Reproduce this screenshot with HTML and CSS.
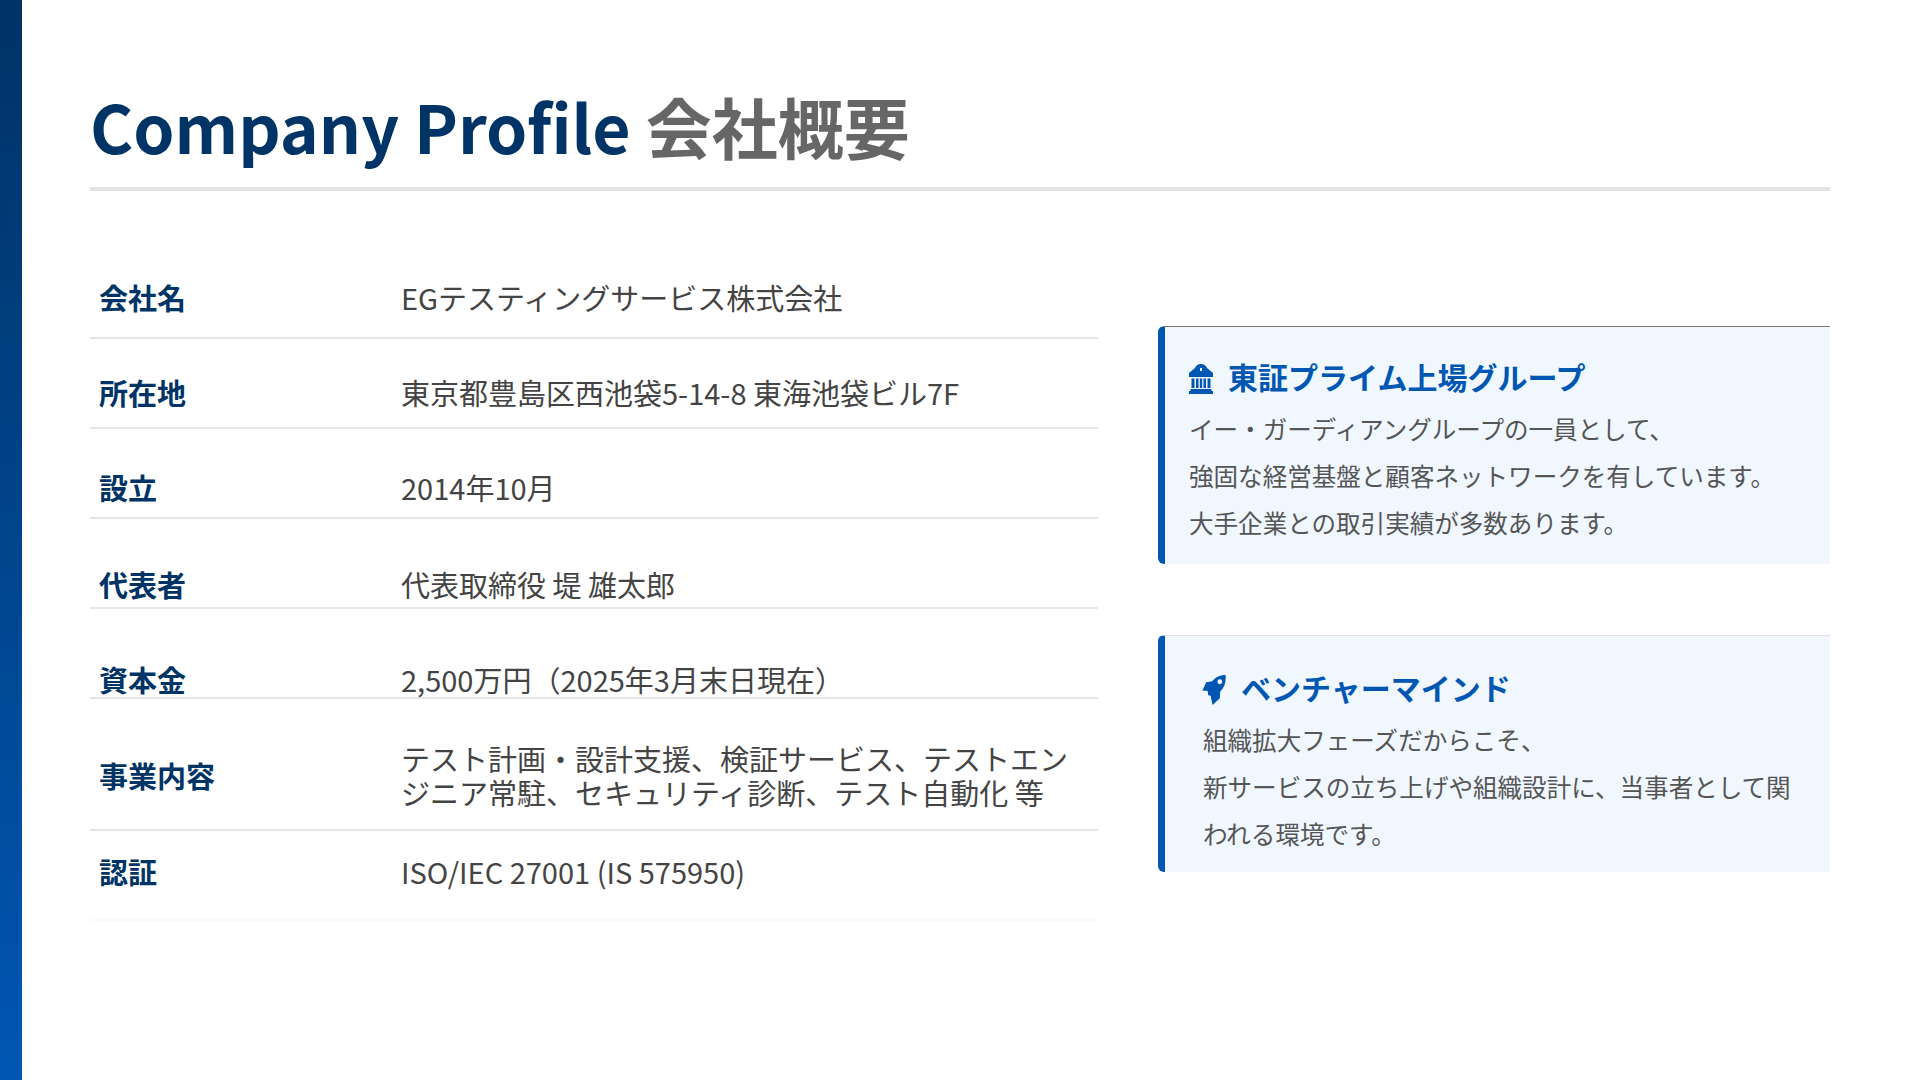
FILE: index.html
```html
<!DOCTYPE html>
<html lang="ja">
<head>
<meta charset="utf-8">
<title>Company Profile 会社概要</title>
<link rel="stylesheet" href="styles.css">
</head>
<body>
<div class="slide">
  <div class="sidebar"></div>
  <main class="content">
    <h1 class="title">Company Profile <span class="title-ja">会社概要</span></h1>
    <div class="columns">
      <div class="table">
        <div class="row row-1"><div class="label">会社名</div><div class="value">EGテスティングサービス株式会社</div></div>
        <div class="row row-2"><div class="label">所在地</div><div class="value">東京都豊島区西池袋5-14-8 東海池袋ビル7F</div></div>
        <div class="row row-3"><div class="label">設立</div><div class="value">2014年10月</div></div>
        <div class="row row-4"><div class="label">代表者</div><div class="value">代表取締役 堤 雄太郎</div></div>
        <div class="row row-5"><div class="label">資本金</div><div class="value">2,500万円（2025年3月末日現在）</div></div>
        <div class="row row-6"><div class="label">事業内容</div><div class="value">テスト計画・設計支援、検証サービス、テストエンジニア常駐、セキュリティ診断、テスト自動化 等</div></div>
        <div class="row row-7"><div class="label">認証</div><div class="value">ISO/IEC 27001 (IS 575950)</div></div>
      </div>
      <div class="cards">
        <section class="card card-a">
          <h2 class="card-title">
            <svg class="icon" viewBox="0 0 24 30"><path fill-rule="evenodd" d="M12 0a6.500 6.500 0 0 1 6 4l6 5v4H0V9l6-5a6.500 6.500 0 0 1 6-4zm-1 4v3h2V4h-2zM2.500 14.500h3V24h-3v-9.500zm4.500 0h2.500V24H7v-9.500zm3.800 0h2.400V24h-2.400v-9.500zm3.700 0H17V24h-2.500v-9.500zm4 0h3V24h-3v-9.500zM1.500 25h21v2H24v3H0v-3h1.500v-2z"/></svg>
            東証プライム上場グループ
          </h2>
          <p class="card-text">イー・ガーディアングループの一員として、<br>強固な経営基盤と顧客ネットワークを有しています。<br>大手企業との取引実績が多数あります。</p>
        </section>
        <section class="card card-b">
          <h2 class="card-title">
            <svg class="icon" viewBox="0 0 24 31"><path fill-rule="evenodd" d="M24 0C17.500 0 13.500 2.500 10 6.500L4 7.500 0 16l5.500.5L6 21l2.500.5.500 2.500L10.500 31l7.500-7 .5-7C22.500 13 24.500 8 24 0zM18 4.500a2.500 2.500 0 1 1 0 5 2.500 2.500 0 0 1 0-5z"/></svg>
            ベンチャーマインド
          </h2>
          <p class="card-text">組織拡大フェーズだからこそ、<br>新サービスの立ち上げや組織設計に、当事者として関われる環境です。</p>
        </section>
      </div>
    </div>
  </main>
</div>
</body>
</html>
```
FILE: styles.css
```css
* { box-sizing: border-box; }
html, body { margin: 0; padding: 0; }
body {
  width: 1920px;
  height: 1080px;
  overflow: hidden;
  background: #fff;
  font-family: "Noto Sans CJK JP", "Noto Sans", sans-serif;
}
.slide { display: flex; width: 1920px; height: 1080px; }
.sidebar {
  width: 22px;
  flex: none;
  background: linear-gradient(180deg, #003366 0%, #0056b3 100%);
}
.content { flex: 1; padding: 76px 90px 0 68px; }
.title {
  margin: 0;
  height: 115px;
  border-bottom: 4px solid #e3e3e3;
  font-size: 66px;
  line-height: 98px;
  font-weight: 700;
  color: #003366;
}
.title-ja { color: #666; }
.columns { display: flex; gap: 60px; align-items: flex-start; margin-top: 59px; }
.table { width: 1008px; flex: none; border-top: 1px solid #fcfcfc; }
.row {
  display: grid;
  grid-template-columns: 302px 1fr;
  height: 90px;
  border-bottom: 2px solid #e6e6e6;
  font-size: 29px;
  line-height: 34px;
}
.row-1 { height: 88px; padding-top: 29px; }
.row-2 { padding-top: 36px; }
.row-3 { padding-top: 41px; }
.row-4 { padding-top: 48px; }
.row-5 { padding-top: 53px; }
.row-6 { height: 132px; padding-top: 42px; }
.row-7 { padding-top: 23px; border-bottom-color: #fafafa; }
.label { padding-left: 9px; font-weight: 700; color: #003366; }
.row-6 .label { padding-top: 17px; }
.value { padding: 0 20px 0 9px; color: #444; }
.cards { flex: 1; display: flex; flex-direction: column; gap: 71px; margin-top: 76px; }
.card {
  height: 238px;
  background: #f0f7ff;
  border-left: 7px solid #0056b3;
  border-radius: 6px 0 0 6px;
}
.card-a { border-top: 1px solid #777; padding: 28px 20px 0 24px; }
.card-b { height: 237px; border-top: 1px solid #e0e0e0; padding: 30px 30px 0 37px; }
.card-title {
  display: flex;
  align-items: center;
  gap: 15px;
  margin: 0;
  height: 42px;
  font-size: 30px;
  line-height: 42px;
  font-weight: 700;
  color: #0056b3;
}
.icon { width: 24px; height: 30px; margin-top: 5px; fill: #0056b3; flex: none; }
.card-text {
  font-size: 24.56px;
  line-height: 47px;
  color: #555;
}
.card-a .card-text { margin: 8px 0 0; }
.card-b .card-text { margin: 8px 0 0 1px; }
```
